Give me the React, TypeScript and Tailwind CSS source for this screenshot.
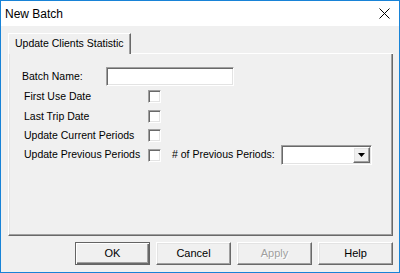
const raised =
  "border border-t-white border-l-white border-r-[#696969] border-b-[#696969] shadow-[inset_-1px_-1px_0_#a0a0a0,inset_1px_1px_0_#e3e3e3]";
const sunken =
  "border border-t-[#a0a0a0] border-l-[#a0a0a0] border-r-white border-b-white shadow-[inset_1px_1px_0_#696969,inset_-1px_-1px_0_#e3e3e3] bg-white";

function CheckBox() {
  return <div className={`h-[13px] w-[13px] shrink-0 ${sunken}`} />;
}

function Button({
  label,
  primary,
  disabled,
}: {
  label: string;
  primary?: boolean;
  disabled?: boolean;
}) {
  const frame = primary
    ? "border border-[#646464] shadow-[inset_1px_1px_0_#ffffff,inset_-1px_-1px_0_#696969,inset_-2px_-2px_0_#a0a0a0]"
    : raised;
  return (
    <div
      className={`flex h-[23px] w-[75px] items-center justify-center bg-[#f0f0f0] text-[11px] ${frame} ${
        disabled ? "text-[#a0a0a0] [text-shadow:1px_1px_0_#ffffff]" : "text-black"
      }`}
    >
      {label}
    </div>
  );
}

export default function App() {
  return (
    <div className="flex h-[273px] w-[400px] flex-col border border-[#1883d7] bg-[#f0f0f0] font-['Liberation_Sans',Arial,sans-serif] text-black">
      {/* title bar */}
      <div className="flex h-[25px] shrink-0 items-center justify-between bg-white pl-[4px] pr-[9px]">
        <span className="text-[12px]">New Batch</span>
        <svg width="11" height="11" viewBox="0 0 11 11">
          <path d="M0.5 0.5L10.5 10.5M10.5 0.5L0.5 10.5" stroke="#000" strokeWidth="1" />
        </svg>
      </div>

      <div className="flex flex-1 flex-col pl-[7px] pr-[6px] pt-[7px]">
        {/* tab strip */}
        <div className="flex h-[21px]">
          <div className="flex h-full w-[123px] items-center border-l border-t border-r border-l-white border-t-white border-r-[#696969] pl-[6px] text-[10.5px] shadow-[inset_-1px_0_0_#a0a0a0]">
            Update Clients Statistic
          </div>
          <div className="h-px flex-1 self-end bg-white" />
        </div>

        {/* tab page */}
        <div className="flex h-[182px] flex-col border-b border-l border-r border-l-white border-r-[#696969] border-b-[#696969] text-[10.5px] shadow-[inset_-1px_-1px_0_#a0a0a0,inset_1px_0_0_#e3e3e3]">
          <div className="mt-[13px] flex h-[19px] items-center">
            <span className="ml-[13px] w-[84px]">Batch Name:</span>
            <div className={`h-[19px] w-[128px] ${sunken}`} />
          </div>

          <div className="mt-[4px] flex h-[13px] items-center">
            <span className="ml-[15px] w-[124px]">First Use Date</span>
            <CheckBox />
          </div>
          <div className="mt-[7px] flex h-[13px] items-center">
            <span className="ml-[15px] w-[124px]">Last Trip Date</span>
            <CheckBox />
          </div>
          <div className="mt-[6px] flex h-[13px] items-center">
            <span className="ml-[15px] w-[124px]">Update Current Periods</span>
            <CheckBox />
          </div>
          <div className="mt-[3px] flex h-[20px] items-center">
            <span className="ml-[15px] w-[124px]">Update Previous Periods</span>
            <CheckBox />
            <span className="ml-[11px] w-[109px]">
              # of Previous Periods:
            </span>
            <div className={`flex h-[20px] w-[91px] justify-end p-px ${sunken}`}>
              <div
                className={`flex h-full w-[17px] items-center justify-center bg-[#f0f0f0] ${raised}`}
              >
                <svg width="7" height="4" viewBox="0 0 7 4">
                  <path d="M0 0H7L3.5 4Z" fill="#000" />
                </svg>
              </div>
            </div>
          </div>
        </div>

        {/* buttons */}
        <div className="mt-[6px] flex justify-end gap-[6px]">
          <Button label="OK" primary />
          <Button label="Cancel" />
          <Button label="Apply" disabled />
          <Button label="Help" />
        </div>
      </div>
    </div>
  );
}
